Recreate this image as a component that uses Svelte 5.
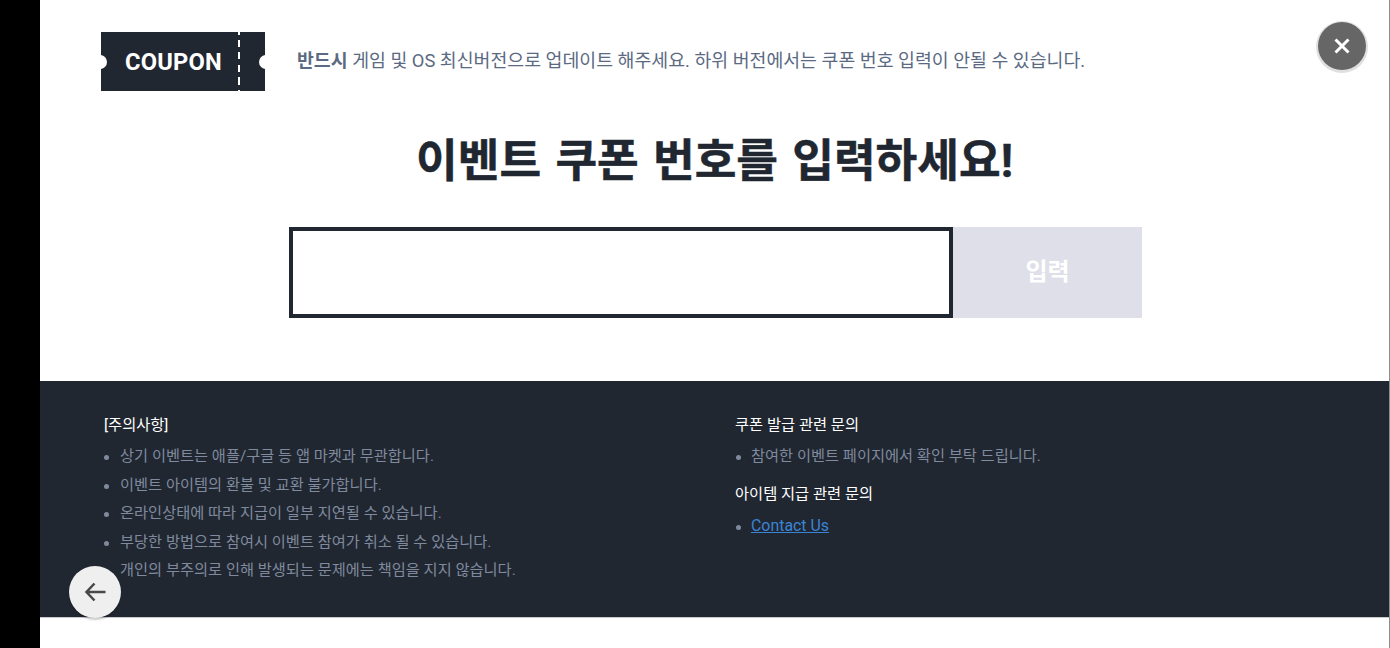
<script lang="ts">
  const notices = [
    '상기 이벤트는 애플/구글 등 앱 마켓과 무관합니다.',
    '이벤트 아이템의 환불 및 교환 불가합니다.',
    '온라인상태에 따라 지급이 일부 지연될 수 있습니다.',
    '부당한 방법으로 참여시 이벤트 참여가 취소 될 수 있습니다.',
    '개인의 부주의로 인해 발생되는 문제에는 책임을 지지 않습니다.'
  ];

  let code = '';
</script>

<div class="page">
  <div class="panel">
    <header class="notice">
      <div class="ticket">
        <span class="ticket-label">COUPON</span>
        <span class="ticket-line"></span>
      </div>
      <p><strong>반드시</strong> 게임 및 OS 최신버전으로 업데이트 해주세요. 하위 버전에서는 쿠폰 번호 입력이 안될 수 있습니다.</p>
    </header>

    <h1>이벤트 쿠폰 번호를 입력하세요!</h1>

    <form class="coupon-form" on:submit|preventDefault>
      <input type="text" bind:value={code} aria-label="쿠폰 번호" />
      <button type="submit" disabled={!code}><span>입력</span></button>
    </form>

    <footer>
      <section class="col-left">
        <h2>[주의사항]</h2>
        <ul>
          {#each notices as item}
            <li>{item}</li>
          {/each}
        </ul>
      </section>
      <section class="col-right">
        <h2>쿠폰 발급 관련 문의</h2>
        <ul>
          <li>참여한 이벤트 페이지에서 확인 부탁 드립니다.</li>
        </ul>
        <h2 class="second">아이템 지급 관련 문의</h2>
        <ul>
          <li><a href="#contact">Contact Us</a></li>
        </ul>
      </section>
    </footer>

    <button class="close" aria-label="닫기">
      <svg width="18" height="18" viewBox="0 0 18 18"><path d="M2.5 2.5l13 13M15.5 2.5l-13 13" stroke="#fff" stroke-width="3" fill="none" /></svg>
    </button>
    <button class="back" aria-label="뒤로">
      <svg width="24" height="24" viewBox="0 0 24 24"><path d="M22.5 12H3.5M11.5 3.5L3.5 12l8 8.5" stroke="#484848" stroke-width="2.5" fill="none" /></svg>
    </button>
  </div>
</div>

<style>
  :global(body) {
    margin: 0;
    background: #000;
  }

  .page {
    height: 648px;
    padding-left: 40px;
    background: #000;
    font-family: Roboto, "Noto Sans CJK KR", sans-serif;
    overflow: hidden;
  }

  .panel {
    position: relative;
    height: 648px;
    background: #fff;
    border-right: 1px solid #8a8d92;
    box-sizing: border-box;
  }

  .notice {
    display: flex;
    align-items: center;
    gap: 32px;
    padding: 32px 0 0 61px;
  }

  .notice p {
    margin: 0 0 2px;
    font-size: 18.33px;
    line-height: 57px;
    color: #5b6a83;
  }

  .notice strong {
    font-weight: 700;
  }

  .ticket {
    position: relative;
    width: 164px;
    height: 59px;
    background: #212731;
    display: flex;
    align-items: center;
    overflow: hidden;
  }

  .ticket::before,
  .ticket::after {
    content: '';
    position: absolute;
    top: 23px;
    width: 14px;
    height: 14px;
    border-radius: 50%;
    background: #fff;
  }

  .ticket::before {
    left: -8px;
  }

  .ticket::after {
    right: -8px;
  }

  .ticket-label {
    margin-left: 24px;
    color: #fff;
    font-size: 23.7px;
    font-weight: 700;
    letter-spacing: 0.2px;
  }

  .ticket-line {
    position: absolute;
    left: 137px;
    top: 0;
    width: 2px;
    height: 59px;
    background: repeating-linear-gradient(#fff 0 2.5px, transparent 2.5px 7.5px, #fff 7.5px 12.5px);
  }

  h1 {
    margin: 39px 0 0;
    text-align: center;
    font-size: 45.3px;
    line-height: 63px;
    font-weight: 700;
    word-spacing: 3px;
    color: #212731;
    -webkit-text-stroke: 0.5px #212731;
  }

  .coupon-form {
    display: flex;
    margin: 34px 0 0 249px;
    height: 91px;
  }

  .coupon-form input {
    width: 664px;
    height: 91px;
    box-sizing: border-box;
    border: 4px solid #212731;
    background: #fff;
    outline: none;
    padding: 0 16px;
    font-size: 24px;
  }

  .coupon-form button {
    width: 189px;
    height: 91px;
    padding: 0 0 7px;
    border: 0;
    background: #dfdfe9;
    color: #fff;
    font-family: inherit;
    font-size: 24px;
    font-weight: 700;
  }

  footer {
    display: flex;
    height: 237px;
    margin-top: 63px;
    box-sizing: border-box;
    padding: 33px 0 0 63px;
    background: #212731;
    border-bottom: 1px solid #c8cacd;
  }

  .col-left {
    width: 632px;
  }

  .col-left h2 {
    padding-left: 1px;
  }

  h2 {
    margin: 0;
    font-size: 15.3px;
    line-height: 22px;
    font-weight: 400;
    color: #fff;
  }

  h2.second {
    margin-top: 12px;
  }

  ul {
    margin: 6px 0 0;
    padding: 0 0 0 17px;
    list-style: none;
  }

  .col-right ul {
    padding-left: 16px;
  }

  .second + ul {
    margin-top: 7px;
  }

  li {
    position: relative;
    font-size: 15.27px;
    line-height: 28.5px;
    color: #7f8a9e;
  }

  li::before {
    content: '';
    position: absolute;
    left: -16px;
    top: 13px;
    width: 5px;
    height: 5px;
    border-radius: 50%;
    background: #7f8a9e;
  }

  .col-right li::before {
    left: -15px;
  }

  a {
    color: #3a84d6;
    font-size: 15.9px;
    text-decoration: underline;
  }

  .close {
    position: absolute;
    left: 1278px;
    top: 22px;
    width: 48px;
    height: 48px;
    padding: 0;
    border: 0;
    border-radius: 50%;
    background: #666;
    display: flex;
    align-items: center;
    justify-content: center;
    box-shadow: 0 1px 0 2px #e0e0e0;
  }

  .back {
    position: absolute;
    left: 29px;
    top: 566px;
    width: 52px;
    height: 52px;
    padding: 0;
    border: 0;
    border-radius: 50%;
    background: #efefef;
    display: flex;
    align-items: center;
    justify-content: center;
    box-shadow: 0 2px 2px rgba(0, 0, 0, 0.2);
  }
</style>
